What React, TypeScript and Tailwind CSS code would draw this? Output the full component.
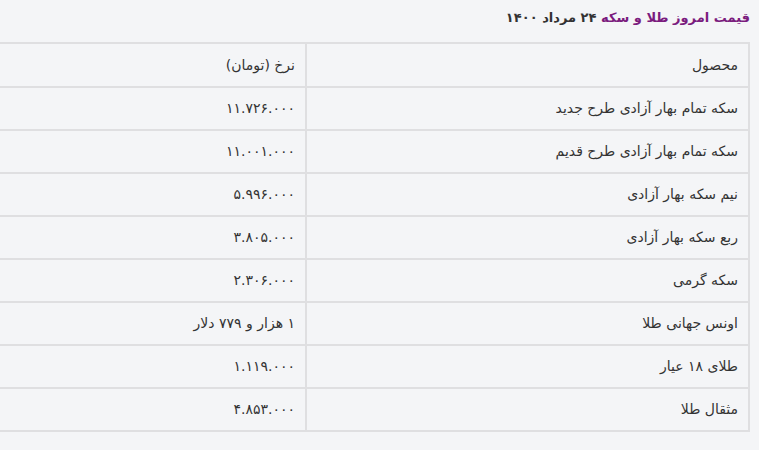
const rows: [string, string][] = [
  ['سکه تمام بهار آزادی طرح جدید', '۱۱.۷۲۶.۰۰۰'],
  ['سکه تمام بهار آزادی طرح قدیم', '۱۱.۰۰۱.۰۰۰'],
  ['نیم سکه بهار آزادی', '۵.۹۹۶.۰۰۰'],
  ['ربع سکه بهار آزادی', '۳.۸۰۵.۰۰۰'],
  ['سکه گرمی', '۲.۳۰۶.۰۰۰'],
  ['اونس جهانی طلا', '۱ هزار و ۷۷۹ دلار'],
  ['طلای ۱۸ عیار', '۱.۱۱۹.۰۰۰'],
  ['مثقال طلا', '۴.۸۵۳.۰۰۰'],
]

export default function App() {
  return (
    <div
      dir="rtl"
      className="w-[759px] h-[450px] overflow-hidden bg-[#f4f5f7] pr-[9px] text-[#333] font-['DejaVu_Sans',sans-serif]"
    >
      {/* عنوان */}
      <h3 className="h-[42px] pt-[5px] text-[13px] font-bold leading-[26px]">
        <span className="text-[#7b1c7e]">قیمت امروز طلا و سکه</span> ۲۴ مرداد ۱۴۰۰
      </h3>

      {/* جدول قیمت */}
      <table className="w-[780px] border-collapse text-[14px]">
        <tbody>
          <tr className="h-[44px]">
            <td className="w-[443px] border-2 border-[#dfdfe1] px-[10px]">محصول</td>
            <td className="border-2 border-[#dfdfe1] px-[10px]">نرخ (تومان)</td>
          </tr>
          {rows.map(([name, price]) => (
            <tr key={name} className="h-[43px]">
              <td className="border-2 border-[#dfdfe1] px-[10px]">{name}</td>
              <td className="border-2 border-[#dfdfe1] px-[10px]">{price}</td>
            </tr>
          ))}
        </tbody>
      </table>
    </div>
  )
}
